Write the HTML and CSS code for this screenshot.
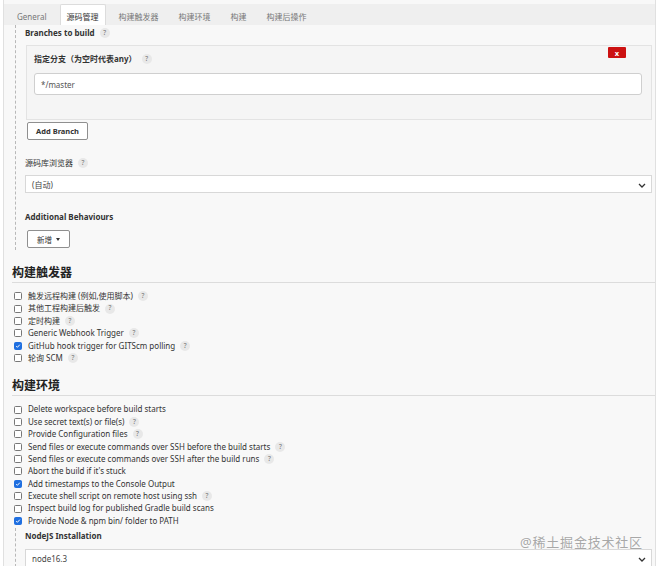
FILE: index.html
```html
<!DOCTYPE html>
<html lang="zh">
<head>
<meta charset="utf-8">
<title>Jenkins 配置</title>
<link rel="stylesheet" href="styles.css">
</head>
<body>
<div class="panel">
  <div class="tabbar">
    <span class="tab">General</span>
    <span class="tab active">源码管理</span>
    <span class="tab">构建触发器</span>
    <span class="tab">构建环境</span>
    <span class="tab">构建</span>
    <span class="tab">构建后操作</span>
  </div>

  <div class="nested scm">
    <div class="label bold">Branches to build <span class="help">?</span></div>
    <div class="branchbox">
      <span class="xbtn">x</span>
      <div class="label bold">指定分支（为空时代表any） <span class="help">?</span></div>
      <div class="input">*/master</div>
    </div>
    <div class="btn bold add">Add Branch</div>
    <div class="label gap-browser">源码库浏览器 <span class="help">?</span></div>
    <div class="select">(自动)<svg class="chev" viewBox="0 0 8 5" width="8" height="5"><path d="M1 1l3 3 3-3" fill="none" stroke="#333" stroke-width="1.3"/></svg></div>
    <div class="label bold gap-add">Additional Behaviours</div>
    <div class="btn new">新增 <span class="caret"></span></div>
  </div>

  <h2 class="section">构建触发器</h2>
  <div class="checks">
    <div class="row"><span class="cb"></span>触发远程构建 (例如,使用脚本) <span class="help">?</span></div>
    <div class="row"><span class="cb"></span>其他工程构建后触发 <span class="help">?</span></div>
    <div class="row"><span class="cb"></span>定时构建 <span class="help">?</span></div>
    <div class="row"><span class="cb"></span>Generic Webhook Trigger <span class="help">?</span></div>
    <div class="row"><span class="cb on"><svg viewBox="0 0 10 10" width="8" height="8"><path d="M2 5.2l2 2 4-4.4" fill="none" stroke="#fff" stroke-width="1.6"/></svg></span>GitHub hook trigger for GITScm polling <span class="help">?</span></div>
    <div class="row"><span class="cb"></span>轮询 SCM <span class="help">?</span></div>
  </div>

  <h2 class="section env">构建环境</h2>
  <div class="checks env-checks">
    <div class="row"><span class="cb"></span>Delete workspace before build starts</div>
    <div class="row"><span class="cb"></span>Use secret text(s) or file(s) <span class="help">?</span></div>
    <div class="row"><span class="cb"></span>Provide Configuration files <span class="help">?</span></div>
    <div class="row"><span class="cb"></span>Send files or execute commands over SSH before the build starts <span class="help">?</span></div>
    <div class="row"><span class="cb"></span>Send files or execute commands over SSH after the build runs <span class="help">?</span></div>
    <div class="row"><span class="cb"></span>Abort the build if it's stuck</div>
    <div class="row"><span class="cb on"><svg viewBox="0 0 10 10" width="8" height="8"><path d="M2 5.2l2 2 4-4.4" fill="none" stroke="#fff" stroke-width="1.6"/></svg></span>Add timestamps to the Console Output</div>
    <div class="row"><span class="cb"></span>Execute shell script on remote host using ssh <span class="help">?</span></div>
    <div class="row"><span class="cb"></span>Inspect build log for published Gradle build scans</div>
    <div class="row"><span class="cb on"><svg viewBox="0 0 10 10" width="8" height="8"><path d="M2 5.2l2 2 4-4.4" fill="none" stroke="#fff" stroke-width="1.6"/></svg></span>Provide Node &amp; npm bin/ folder to PATH</div>
  </div>

  <div class="nested node">
    <div class="label bold">NodeJS Installation</div>
    <div class="select node-select">node16.3<svg class="chev" viewBox="0 0 8 5" width="8" height="5"><path d="M1 1l3 3 3-3" fill="none" stroke="#333" stroke-width="1.3"/></svg></div>
  </div>

  <div class="watermark">@稀土掘金技术社区</div>
</div>
</body>
</html>
```

FILE: styles.css
```css
* { box-sizing: border-box; }
html, body { margin: 0; padding: 0; background: #fff; }
body {
  font-family: "Noto Sans", "Noto Sans CJK SC", sans-serif;
  font-size: 8px;
  color: #333;
  width: 657px;
  height: 566px;
  overflow: hidden;
}
.panel {
  position: relative;
  margin-left: 3px;
  width: 653px;
  height: 566px;
  background: #f8f8f8;
  border-left: 1px solid #e0e0e0;
  border-right: 1px solid #e0e0e0;
  overflow: hidden;
}
.tabbar {
  margin-top: 4px;
  height: 21px;
  background: #efefef;
  display: flex;
  align-items: stretch;
  padding-left: 6px;
  gap: 6px;
}
.tab {
  display: flex;
  align-items: center;
  padding: 2px 6px 0;
  color: #777;
  font-size: 8px;
  border: 1px solid transparent;
  border-bottom: none;
}
.tab.active {
  background: #fff;
  color: #333;
  border-color: #dcdcdc;
  border-radius: 2px 2px 0 0;
}
.nested {
  margin-left: 11px;
  margin-right: 3px;
  border-left: 1px dashed #b8b8b8;
  padding-left: 9px;
}
.scm { padding-top: 2px; padding-bottom: 2px; }
.label {
  line-height: 12px;
  height: 12px;
  font-size: 8px;
  color: #333;
  display: flex;
  align-items: center;
  white-space: nowrap;
}
.bold { font-weight: 700; }
.help {
  display: inline-flex;
  align-items: center;
  justify-content: center;
  width: 10px;
  height: 10px;
  border-radius: 50%;
  background: #e8e8e8;
  color: #707070;
  font-size: 6.5px;
  font-weight: 400;
  margin-left: 5px;
}
.branchbox {
  position: relative;
  margin-top: 6px;
  margin-left: 1px;
  background: #f5f5f5;
  border: 1px solid #e3e3e3;
  padding: 7px 9px 24px 7px;
}
.xbtn {
  position: absolute;
  top: 1px;
  right: 25px;
  width: 18px;
  height: 11px;
  background: #cc1111;
  color: #fff;
  font-size: 7.5px;
  font-weight: 700;
  display: flex;
  align-items: center;
  justify-content: center;
  border-radius: 1px;
}
.input {
  margin-top: 8px;
  height: 22px;
  background: #fff;
  border: 1px solid #cfcfcf;
  border-radius: 3px;
  display: flex;
  align-items: center;
  padding-left: 6px;
  color: #555;
  font-size: 8px;
}
.btn {
  margin-top: 2px;
  margin-left: 2px;
  height: 18px;
  background: #fff;
  border: 1px solid #8f8f8f;
  border-radius: 2px;
  display: inline-flex;
  align-items: center;
  justify-content: center;
  font-size: 7.5px;
  color: #333;
}
.add { width: 61px; }
.new { width: 43px; margin-top: 7px; gap: 4px; }
.caret {
  width: 0; height: 0;
  border-left: 2.5px solid transparent;
  border-right: 2.5px solid transparent;
  border-top: 3px solid #333;
}
.gap-browser { margin-top: 17px; }
.gap-add { margin-top: 18px; }
.select {
  position: relative;
  margin-top: 6px;
  height: 18px;
  background: #fff;
  border: 1px solid #d8d8d8;
  display: flex;
  align-items: center;
  padding-left: 6px;
  color: #444;
  font-size: 8px;
}
.chev { position: absolute; right: 5px; top: 7px; }
h2.section {
  margin: 15px 0 0 8px;
  font-size: 12px;
  line-height: 16px;
  font-weight: 700;
  color: #222;
  border-bottom: 1px solid #dcdcdc;
  padding-bottom: 1px;
}
h2.env { margin-top: 14px; }
.checks { margin-top: 7px; padding-left: 10px; }
.env-checks { margin-top: 7px; }
.row {
  height: 12.4px;
  line-height: 12.4px;
  display: flex;
  align-items: center;
  white-space: nowrap;
  font-size: 8px;
  color: #333;
}
.row .help { margin-left: 5px; }
.cb {
  width: 8px;
  height: 8px;
  border: 1px solid #777;
  border-radius: 1.5px;
  background: #fff;
  margin-right: 6px;
  display: inline-flex;
  align-items: center;
  justify-content: center;
  flex: none;
}
.cb.on { background: #1f6fe0; border-color: #1f6fe0; }
.cb svg { display: block; }
.node { padding-top: 2px; margin-top: 1px; }
.node-select { margin-top: 7px; }
.watermark {
  position: absolute;
  left: 516px;
  top: 532px;
  font-size: 13px;
  color: #a8a8a8;
  letter-spacing: 0.8px;
  text-shadow: 0 0 2px #fff;
}
```
